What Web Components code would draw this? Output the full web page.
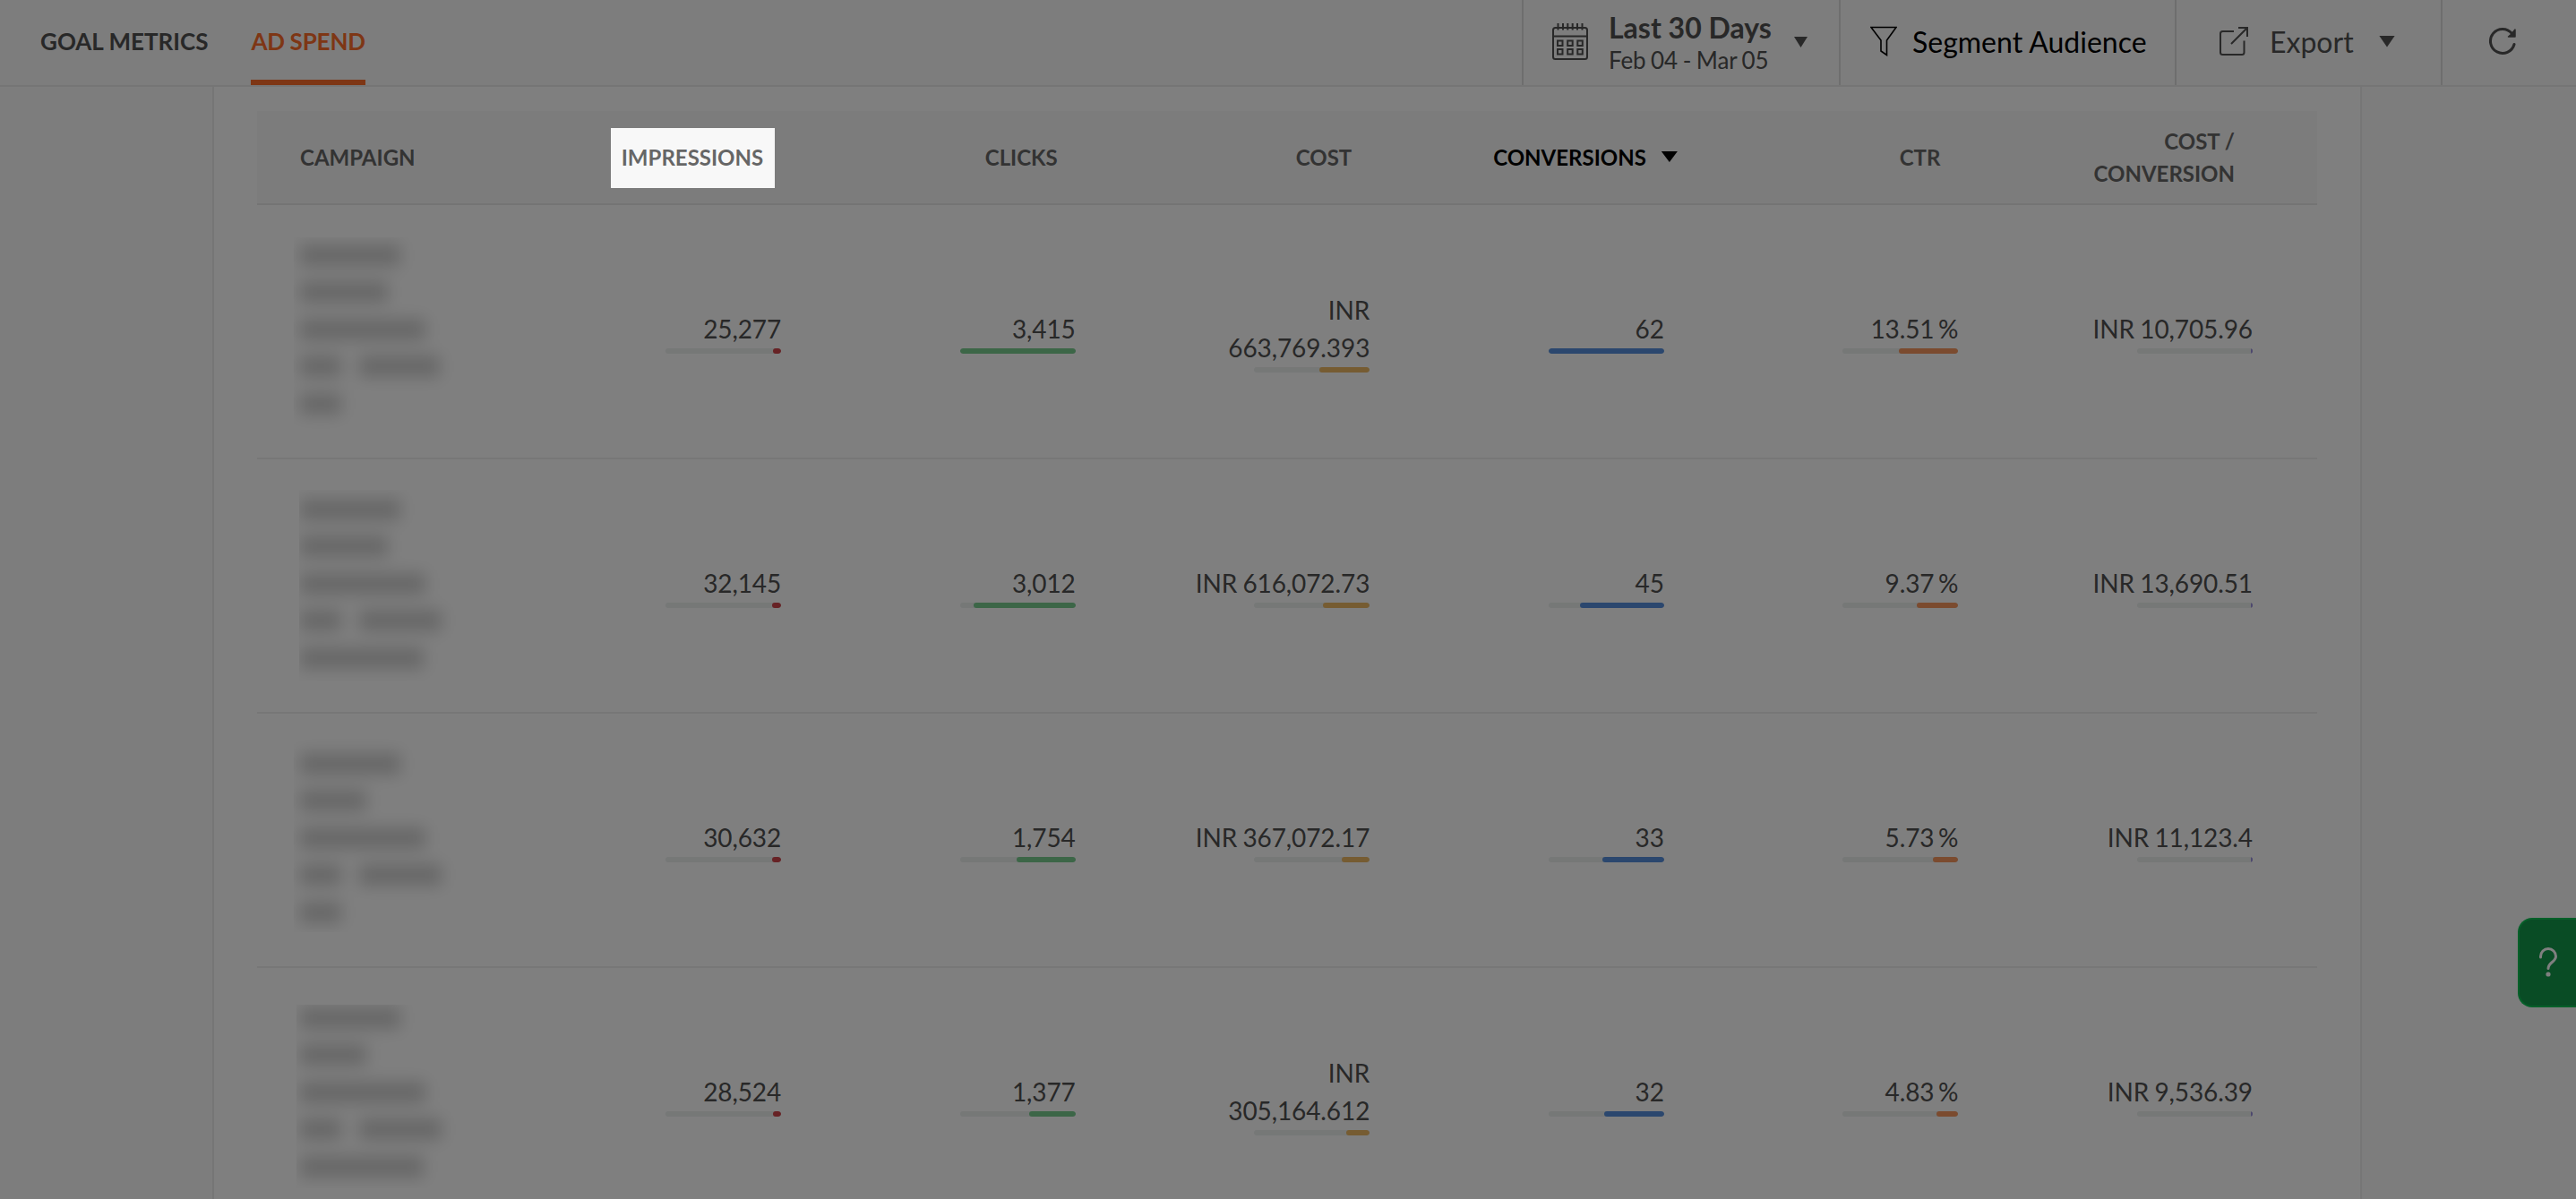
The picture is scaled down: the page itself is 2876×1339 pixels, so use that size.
<!DOCTYPE html>
<html lang="en">
<head>
<meta charset="utf-8">
<title>Ad Spend</title>
<style>
    html, body { margin: 0; height: 100%; overflow: hidden; }
    body { font-family: Lato, "Noto Sans", sans-serif; color: #505050; background: #fbfbfb; }
</style>
</head>
<body>
<ad-dashboard></ad-dashboard>
<script>
    // FUNCTION: define - register an element whose shadow root is a plain string or built from its attributes
    const define = (name, html) => customElements.define(
        name,
        class extends HTMLElement {
            constructor() {
                super().attachShadow({ mode: "open" });
            }
            connectedCallback() {
                this.shadowRoot.innerHTML = typeof html == "function" ? html(this) : html;
            }
        }
    );

    const icons = {
        calendar: `<svg width="40" height="42" viewBox="0 0 40 42" fill="none" stroke="currentColor" stroke-width="2">
            <rect x="1" y="6" width="38" height="35" rx="2.5"/><path d="M1 15.500H39M6.500 1V8.500M12 1V8.500M17.300 1V8.500M22.700 1V8.500M28 1V8.500M33.500 1V8.500"/>
            <path d="M6 20.500h5.500v5.500h-5.500zM17.200 20.500h5.500v5.500h-5.500zM28.300 20.500h5.500v5.500h-5.500zM6 30h5.500v5.500h-5.500zM17.200 30h5.500v5.500h-5.500zM28.300 30h5.500v5.500h-5.500z"/></svg>`,
        funnel: `<svg width="30" height="34" viewBox="0 0 30 34" fill="none" stroke="currentColor" stroke-width="1.6">
            <path d="M1 1.500H29L18.500 16V32.500L12 28V16Z"/></svg>`,
        share: `<svg width="34" height="34" viewBox="0 0 34 34" fill="none" stroke="currentColor" stroke-width="2">
            <path d="M17 6H4.500Q2 6 2 8.500V29.500Q2 32 4.500 32H26Q28.500 32 28.500 29.500V16.500M14 20L32 2M22 2H32V12"/></svg>`,
        refresh: `<svg width="32" height="32" viewBox="0 0 32 32" fill="none" stroke="currentColor" stroke-width="3" stroke-linecap="round">
            <path d="M29 19.500A13.500 13.500 0 1 1 26.500 7.500"/><path d="M30 3V11H22.500L26 8Z" fill="currentColor" stroke-width="1.500" stroke-linejoin="round"/></svg>`
    };

    define("nav-tab", `
        <style>
            :host { display: flex; align-items: center; height: 95px; box-sizing: border-box; padding-bottom: 3px; font-size: 26px; font-weight: 700; white-space: nowrap }
            :host([active]) { color: #fc6d2b; box-shadow: inset 0 -6px #fc6d2b; letter-spacing: -.15px; word-spacing: -.6px }
        </style><slot></slot>`);

    define("tool-button", `
        <style>
            :host { display: flex; align-items: center; box-sizing: border-box; height: 95px; padding-bottom: 3px; border-left: 2px solid #dcdcdc; font-size: 32px; white-space: nowrap }
        </style><slot></slot>`);

    define("ui-icon", el => `
        <style>:host { display: block } svg { display: block }</style>${icons[el.getAttribute("name")]}`);

    define("down-caret", `
        <style>
            :host { display: block; width: 18px; height: 13px; background: currentColor; clip-path: polygon(0 0, 100% 0, 50% 100%) }
        </style>`);

    define("date-range", `
        <style>
            :host { display: block }
            b, span { display: block }
            b { font-size: 32px; line-height: 38px }
            span { font-size: 26px; line-height: 34px; letter-spacing: -.1px; word-spacing: -1px }
        </style><b><slot name="label"></slot></b><span><slot></slot></span>`);

    define("top-bar", `
        <style>
            :host { display: flex; justify-content: space-between; height: 95px; border-bottom: 2px solid #eaeaea; background: #fafafa }
            nav { display: flex; gap: 48px; padding-left: 45px }
            .tools { display: flex }
            .date { width: 354px; padding-left: 32px }
            .date ui-icon { margin-top: -1px }
            .date date-range { width: 181px; margin: 4px 26px 0 23px }
            .date down-caret { width: 15px; height: 12px; margin-top: 2px }
            .segment { width: 375px; padding-left: 33px; color: #000 }
            .segment ui-icon { margin-right: 17px }
            .export { width: 297px; padding-left: 47px }
            .export span { width: 95px; margin: 0 27px 0 23px }
            .refresh { width: 151px; padding-left: 51px }
        </style>
        <nav><nav-tab>GOAL METRICS</nav-tab><nav-tab active>AD SPEND</nav-tab></nav>
        <div class="tools">
            <tool-button class="date"><ui-icon name="calendar"></ui-icon><date-range><span slot="label">Last 30 Days</span>Feb 04 - Mar 05</date-range><down-caret></down-caret></tool-button>
            <tool-button class="segment"><ui-icon name="funnel"></ui-icon>Segment Audience</tool-button>
            <tool-button class="export"><ui-icon name="share"></ui-icon><span>Export</span><down-caret></down-caret></tool-button>
            <tool-button class="refresh"><ui-icon name="refresh"></ui-icon></tool-button>
        </div>`);

    define("column-head", `
        <style>
            :host { display: flex; align-items: center; justify-content: flex-end; position: relative; box-sizing: border-box; padding-right: 92px; font-size: 24px; font-weight: 700; line-height: 36px; text-align: right; color: #666 }
            :host([first]) { justify-content: flex-start; padding: 0 0 0 48px }
            :host([sorted]) { color: #000 }
            down-caret { display: none; position: absolute; right: 57px; top: 45px; height: 12px }
            :host([sorted]) down-caret { display: block }
            /* tour spotlight: the shadow dims the rest of the page */
            i { display: none; position: absolute; z-index: 9; right: 79px; top: 19px; width: 183px; height: 67px; box-shadow: 0 0 0 4000px rgba(0, 0, 0, .5) }
            :host([spotlight]) i { display: block }
        </style><slot></slot><down-caret></down-caret><i></i>`);

    // bar fills from the right, width in px of 129
    define("metric-cell", el => `
        <style>
            :host { display: flex; flex-direction: column; align-items: flex-end; justify-content: center; box-sizing: border-box; padding-right: 72px; font-size: 28px; line-height: 42px; text-align: right; letter-spacing: -.1px; word-spacing: ${el.textContent.endsWith("%") ? -2.500 : -.8}px }
            .text { max-width: 200px }
            .bar { display: flex; justify-content: flex-end; width: 129px; height: 6px; border-radius: 3px; overflow: hidden; background: #ecf0ef; margin-top: 1px }
            .fill { width: ${el.getAttribute("fill")}px; border-radius: 3px; background: ${el.getAttribute("color")} }
        </style><div class="text"><slot></slot></div><div class="bar"><div class="fill"></div></div>`);

    // redacted name: each line is a list of word widths
    define("hidden-name", el => {
        const [left, top, height] = el.getAttribute("box").split(" ");
        return `
        <style>
            :host { display: block }
            .clip { margin: ${top}px 0 0 ${left}px; width: 200px; height: ${height}px; overflow: hidden }
            .lines { margin: ${35 - top}px 0 0 ${48 - left}px; filter: blur(9px) }
            .line { display: flex; align-items: center; gap: 20px; height: 41.5px }
            .line i { height: 24px; background: #000; opacity: .19 }
        </style>
        <div class="clip"><div class="lines">${el.getAttribute("lines").split("/").map(line =>
            `<div class="line">${line.split(" ").map(w => `<i style="width:${w}px"></i>`).join("")}</div>`).join("")}</div></div>`;
    });

    const colors = ["#cf444a", "#78cd8f", "#edb865", "#578fdd", "#f6965f", "#9b90dd"];
    const rows = [
        ["41 36 214", "112/98/140/46 90/46", "25,277", 9, "3,415", 129, "INR 663,769.393", 56, "62", 129, "13.51 %", 66, "INR 10,705.96", 2],
        ["47 34 214", "112/98/140/46 92/138", "32,145", 10, "3,012", 114, "INR 616,072.73", 52, "45", 94, "9.37 %", 46, "INR 13,690.51", 2],
        ["41 20 224", "112/74/140/46 92/46", "30,632", 10, "1,754", 66, "INR 367,072.17", 31, "33", 69, "5.73 %", 28, "INR 11,123.4", 2],
        ["44 41 205", "112/74/140/46 92/138", "28,524", 9, "1,377", 52, "INR 305,164.612", 26, "32", 67, "4.83 %", 24, "INR 9,536.39", 2]
    ];

    define("spend-table", `
        <style>
            :host { display: block; width: 2300px }
            .head, .row { display: grid; grid-template-columns: repeat(7, 1fr); box-sizing: border-box }
            .head { height: 105px; background: #f8f8f8; border-bottom: 2px solid #e9e9e9 }
            .row { height: 284px; border-bottom: 2px solid #efefef }
        </style>
        <div class="head">
            <column-head first>CAMPAIGN</column-head><column-head spotlight>IMPRESSIONS</column-head><column-head>CLICKS</column-head>
            <column-head>COST</column-head><column-head sorted>CONVERSIONS</column-head><column-head>CTR</column-head><column-head>COST /<br>CONVERSION</column-head>
        </div>
        ${rows.map(([box, lines, ...cells]) => `<div class="row"><hidden-name box="${box}" lines="${lines}"></hidden-name>${colors.map((color, i) =>
            `<metric-cell color="${color}" fill="${cells[i * 2 + 1]}">${cells[i * 2]}</metric-cell>`).join("")}</div>`).join("")}`);

    define("help-tab", `
        <style>
            :host { display: flex; align-items: center; justify-content: center; position: absolute; right: 0; top: 1025px; width: 65px; height: 100px; box-sizing: border-box; border: 2px solid #0cc053; border-right: 0; border-radius: 16px 0 0 16px; background: #12984a }
        </style>
        <svg width="22" height="34" viewBox="0 0 22 34" fill="none" stroke="#fff" stroke-width="3" stroke-linecap="round">
            <path d="M2.500 11V10A8.500 8.500 0 0 1 19.500 10C19.500 16.500 11 16.500 11 23.500"/><circle cx="11" cy="30" r="2.600" fill="#fff" stroke="none"/>
        </svg>`);

    define("ad-dashboard", `
        <style>
            :host { display: block; position: relative; height: 100%; overflow: hidden }
            main { box-sizing: border-box; width: 2400px; height: 1250px; margin-left: 237px; padding: 27px 0 0 48px; border: solid #ededed; border-width: 0 2px; background: #fff }
        </style>
        <top-bar></top-bar>
        <main><spend-table></spend-table></main>
        <help-tab></help-tab>`);
</script>
</body>
</html>
